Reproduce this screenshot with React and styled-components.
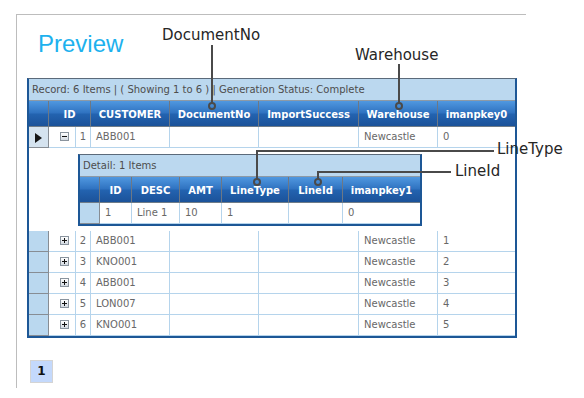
import React from "react";
import styled, { createGlobalStyle, css } from "styled-components";

const GlobalStyle = createGlobalStyle`
  html, body { margin: 0; padding: 0; background: #fff; }
  body { font-family: "DejaVu Sans", Verdana, sans-serif; }
`;

const MAIN_COLS = "20px 27px 15px 79px 89px 100px 79px 77px";
const DETAIL_COLS = "20px 32px 48px 42px 67px 54px 77px";

const Page = styled.div`
  position: relative;
  width: 584px;
  height: 398px;
  padding: 14px 0 0 16px;
  box-sizing: border-box;
  overflow: hidden;
`;

const Frame = styled.div`
  width: 510px;
  height: 374px;
  box-sizing: border-box;
  border-left: 1px solid #bdbdbd;
  border-top: 1px solid #bdbdbd;
  padding: 14px 0 0 10px;
  display: flex;
  flex-direction: column;
  align-items: flex-start;
`;

const Title = styled.h1`
  margin: 0 0 19px 11px;
  font-family: "Liberation Sans", Arial, sans-serif;
  font-weight: normal;
  font-size: 24px;
  line-height: 30px;
  color: #1db1ee;
`;

const Grid = styled.div`
  width: ${(p) => p.$width}px;
  box-sizing: border-box;
  border: 2px solid #1d5796;
  border-top: 1px solid #5b6a7a;
  background: #fff;
`;

const StatusBar = styled.div`
  height: 22px;
  box-sizing: border-box;
  border-bottom: 1px solid #8d9aa6;
  background: #bbd8ef;
  color: #4d4d4d;
  font-size: 10px;
  line-height: 21px;
  padding-left: 3px;
  white-space: nowrap;
`;

const Row = styled.div`
  display: grid;
  grid-template-columns: ${(p) => p.$cols};
  height: 21px;
`;

const HeaderRow = styled(Row)`
  height: 26px;
  background: linear-gradient(#5098e0 0%, #2f72c0 48%, #2363b0 52%, #1b5299 100%);
  border-bottom: 1px solid #6f7c88;
  box-sizing: border-box;
`;

const HeadCell = styled.div`
  grid-column: span ${(p) => p.$span || 1};
  box-sizing: border-box;
  border-right: ${(p) => (p.$last ? "none" : "1px solid #6c7886")};
  color: #fff;
  font-weight: bold;
  font-size: 10px;
  padding-top: 3px;
  line-height: 22px;
  text-align: center;
  white-space: nowrap;
  overflow: hidden;
`;

const Indicator = styled.div`
  box-sizing: border-box;
  border-right: 1px solid #878d94;
  border-bottom: 1px solid #878d94;
  background: ${(p) => (p.$current ? "#d5e3ef" : "#bad8ef")};
  display: flex;
  align-items: center;
  justify-content: center;
`;

const Arrow = styled.span`
  width: 0;
  height: 0;
  border-left: 7px solid #151515;
  border-top: 5px solid transparent;
  border-bottom: 5px solid transparent;
  margin-top: 1px;
`;

const Cell = styled.div`
  box-sizing: border-box;
  border-right: ${(p) => (p.$last ? "none" : "1px solid #b5d4ec")};
  border-bottom: 1px solid #b5d4ec;
  color: #686868;
  font-size: 10px;
  line-height: 20px;
  padding-left: ${(p) => (p.$center ? 0 : 5)}px;
  text-align: ${(p) => (p.$center ? "center" : "left")};
  white-space: nowrap;
  overflow: hidden;
  ${(p) =>
    p.$icon &&
    css`
      display: flex;
      align-items: center;
      justify-content: center;
    `}
`;

const ExpandIcon = styled.span`
  position: relative;
  width: 9px;
  height: 9px;
  box-sizing: border-box;
  border: 1px solid #8a949e;
  background: linear-gradient(#ffffff, #d3dae2);
  margin-top: -1px;
  &::before {
    content: "";
    position: absolute;
    left: 1px;
    top: 3px;
    width: 5px;
    height: 1px;
    background: #111;
  }
  ${(p) =>
    p.$plus &&
    css`
      &::after {
        content: "";
        position: absolute;
        left: 3px;
        top: 1px;
        width: 1px;
        height: 5px;
        background: #111;
      }
    `}
`;

const DetailRow = styled.div`
  display: grid;
  grid-template-columns: 20px 27px 1fr;
  height: 83px;
`;

const DetailHolder = styled.div`
  padding: 6px 0 5px 2px;
`;

const Pager = styled.div`
  margin: 22px 0 0 3px;
  width: 23px;
  height: 23px;
  box-sizing: border-box;
  border: 1px solid #d4d4d4;
  background: #c4d9fc;
  color: #111;
  font-weight: bold;
  font-size: 12px;
  line-height: 21px;
  text-align: center;
`;

const Overlay = styled.svg`
  position: absolute;
  left: 0;
  top: 0;
  pointer-events: none;
`;

const Label = styled.span`
  position: absolute;
  left: ${(p) => p.$x}px;
  top: ${(p) => p.$y}px;
  font-family: "DejaVu Sans", sans-serif;
  font-size: 15px;
  line-height: 15px;
  color: #262626;
  white-space: nowrap;
`;

const rows = [
  { id: 2, c: "ABB001", k: 1 },
  { id: 3, c: "KNO001", k: 2 },
  { id: 4, c: "ABB001", k: 3 },
  { id: 5, c: "LON007", k: 4 },
  { id: 6, c: "KNO001", k: 5 },
];

function MainDataRow({ id, customer, keyVal, current, minus }) {
  return (
    <Row $cols={MAIN_COLS}>
      <Indicator $current={current}>{current && <Arrow />}</Indicator>
      <Cell $icon>
        <ExpandIcon $plus={!minus} />
      </Cell>
      <Cell $center>{id}</Cell>
      <Cell>{customer}</Cell>
      <Cell />
      <Cell />
      <Cell>Newcastle</Cell>
      <Cell $last>{keyVal}</Cell>
    </Row>
  );
}

function DetailGrid() {
  return (
    <Grid $width={344}>
      <StatusBar>Detail: 1 Items</StatusBar>
      <HeaderRow $cols={DETAIL_COLS}>
        <HeadCell />
        <HeadCell>ID</HeadCell>
        <HeadCell>DESC</HeadCell>
        <HeadCell>AMT</HeadCell>
        <HeadCell>LineType</HeadCell>
        <HeadCell>LineId</HeadCell>
        <HeadCell $last>imanpkey1</HeadCell>
      </HeaderRow>
      <Row $cols={DETAIL_COLS}>
        <Indicator />
        <Cell>1</Cell>
        <Cell>Line 1</Cell>
        <Cell>10</Cell>
        <Cell>1</Cell>
        <Cell />
        <Cell $last>0</Cell>
      </Row>
    </Grid>
  );
}

function Callouts() {
  const stroke = "#4a4a4a";
  return (
    <>
      <Overlay width="584" height="398" viewBox="0 0 584 398">
        <g fill="none" stroke={stroke} strokeWidth="2">
          <path d="M212 45 V103" />
          <circle cx="212" cy="106" r="3" />
          <path d="M399 64 V103" />
          <circle cx="399" cy="106" r="3" />
          <path d="M494 151 H257 V179" />
          <circle cx="257" cy="182" r="3" />
          <path d="M451 172 H318 V179" />
          <circle cx="318" cy="182" r="3" />
        </g>
      </Overlay>
      <Label $x={162} $y={28}>DocumentNo</Label>
      <Label $x={355} $y={48}>Warehouse</Label>
      <Label $x={497} $y={142}>LineType</Label>
      <Label $x={455} $y={164}>LineId</Label>
    </>
  );
}

export default function App() {
  return (
    <Page>
      <GlobalStyle />
      <Frame>
        <Title>Preview</Title>
        <Grid $width={490}>
          <StatusBar>
            Record: 6 Items | ( Showing 1 to 6 ) | Generation Status: Complete
          </StatusBar>
          <HeaderRow $cols={MAIN_COLS}>
            <HeadCell />
            <HeadCell $span={2}>ID</HeadCell>
            <HeadCell>CUSTOMER</HeadCell>
            <HeadCell>DocumentNo</HeadCell>
            <HeadCell>ImportSuccess</HeadCell>
            <HeadCell>Warehouse</HeadCell>
            <HeadCell $last>imanpkey0</HeadCell>
          </HeaderRow>
          <MainDataRow id={1} customer="ABB001" keyVal={0} current minus />
          <DetailRow>
            <div />
            <div />
            <DetailHolder>
              <DetailGrid />
            </DetailHolder>
          </DetailRow>
          {rows.map((r) => (
            <MainDataRow key={r.id} id={r.id} customer={r.c} keyVal={r.k} />
          ))}
        </Grid>
        <Pager>1</Pager>
      </Frame>
      <Callouts />
    </Page>
  );
}
